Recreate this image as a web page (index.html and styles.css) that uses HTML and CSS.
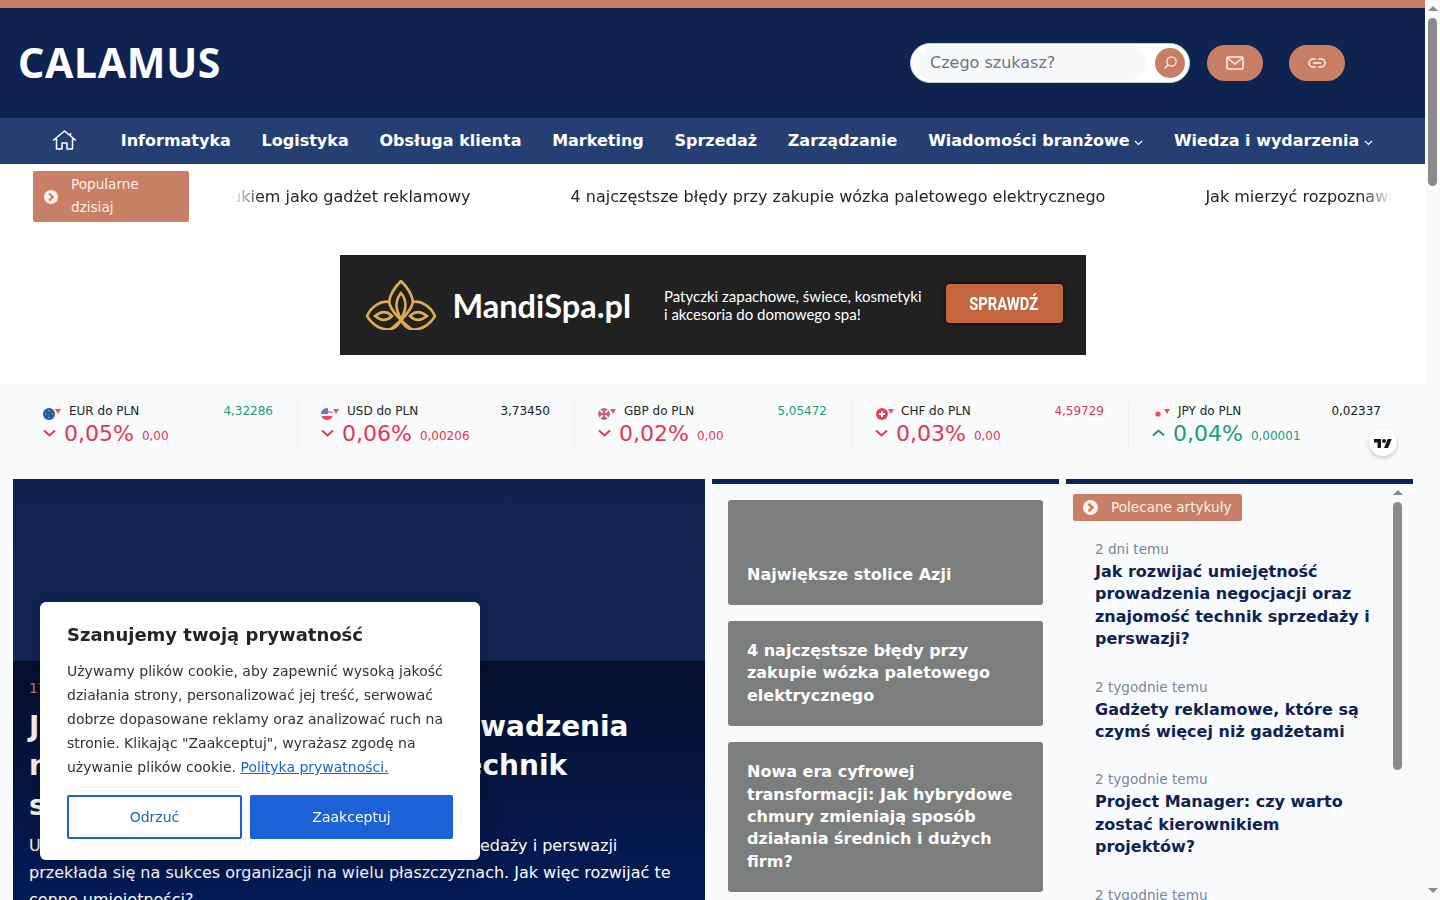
FILE: index.html
```html
<!DOCTYPE html>
<html lang="pl">

<head>
    <meta charset="UTF-8">
    <meta name="viewport" content="width=device-width, initial-scale=1.0">
    <title>Calamus</title>
    <link rel="stylesheet" href="styles.css">
</head>

<body>
    <div class="page">
        <header class="site-header">
            <a href="#" class="logo">CALAMUS</a>
            <div class="header-tools">
                <form class="search">
                    <span class="search-field">Czego szukasz?</span>
                    <span class="search-btn">
                        <svg width="16" height="16" viewBox="0 0 16 16" fill="none" stroke="#fdf1ea" stroke-width="1.2">
                            <circle cx="9.5" cy="6.5" r="4.6" />
                            <path d="M6 10 2.5 13.5" />
                        </svg>
                    </span>
                </form>
                <a href="#" class="pill-btn">
                    <svg width="18" height="14" viewBox="0 0 18 14" fill="none" stroke="#fdf1ea" stroke-width="1.5">
                        <rect x="1" y="1" width="16" height="12" rx="1.5" />
                        <path d="M1.5 2 9 8l7.5-6" />
                    </svg>
                </a>
                <a href="#" class="pill-btn">
                    <svg width="18" height="10" viewBox="0 0 18 10" fill="none" stroke="#fdf1ea" stroke-width="1.5" stroke-linecap="round">
                        <path d="M7 1H5a4 4 0 0 0 0 8h2M11 1h2a4 4 0 0 1 0 8h-2M5.5 5h7" />
                    </svg>
                </a>
            </div>
        </header>

        <nav class="main-nav">
            <a href="#" class="home-link">
                <svg width="25" height="20" viewBox="0 0 25 20" fill="none" stroke="#fff" stroke-width="1.5" stroke-linejoin="round">
                    <path d="M1 10.5 12.5 1 24 10.5M18.5 3v3.2M4.5 8.5V19h5.5v-6h5v6h5.500V8.500" />
                </svg>
            </a>
            <a href="#">Informatyka</a>
            <a href="#">Logistyka</a>
            <a href="#">Obsługa klienta</a>
            <a href="#">Marketing</a>
            <a href="#">Sprzedaż</a>
            <a href="#">Zarządzanie</a>
            <a href="#" class="has-sub">Wiadomości branżowe
                <svg width="9" height="6" viewBox="0 0 9 6" fill="none" stroke="#fff" stroke-width="1.2"><path d="M1 1l3.500 3.500L8 1" /></svg>
            </a>
            <a href="#" class="has-sub">Wiedza i wydarzenia
                <svg width="9" height="6" viewBox="0 0 9 6" fill="none" stroke="#fff" stroke-width="1.2"><path d="M1 1l3.500 3.500L8 1" /></svg>
            </a>
        </nav>

        <div class="ticker">
            <div class="ticker-label">
                <svg class="round-arrow" width="14" height="14" viewBox="0 0 14 14">
                    <circle cx="7" cy="7" r="7" fill="#fdf1ea" />
                    <path d="M5.200 3.500 8.700 7l-3.500 3.500" fill="none" stroke="#c97f66" stroke-width="2.400" />
                </svg>
                <span>Popularne dzisiaj</span>
            </div>
            <div class="ticker-window">
                <div class="ticker-track">
                    <span>Długopis z nadrukiem jako gadżet reklamowy</span>
                    <span>4 najczęstsze błędy przy zakupie wózka paletowego elektrycznego</span>
                    <span>Jak mierzyć rozpoznawalność marki</span>
                </div>
            </div>
        </div>

        <a href="#" class="ad-banner">
            <svg class="ad-logo" width="72" height="50" viewBox="5 11 70 50" fill="none" stroke="#dcab52" stroke-width="2.600">
                <path d="M40 12C46 18 51 24 52 33C60 31 70 38 74 47C68 57 58 62 50 60C45 59 42 55 40 51C38 55 35 59 30 60C22 62 12 57 6 47C10 38 20 31 28 33C29 24 34 18 40 12Z" />
                <path d="M40 24C35 30 33 38 40 50C47 38 45 30 40 24Z" />
                <path d="M28 33C30 42 38 50 50 60M52 33C50 42 42 50 30 60" />
                <path d="M14 47C20 42 26 42 31 47C26 52 20 52 14 47ZM66 47C60 42 54 42 49 47C54 52 60 52 66 47Z" />
            </svg>
            <span class="ad-brand">MandiSpa.pl</span>
            <span class="ad-copy">Patyczki zapachowe, świece, kosmetyki<br>i akcesoria do domowego spa!</span>
            <span class="ad-cta"><span>SPRAWDŹ</span></span>
        </a>

        <div class="lower">
            <section class="quotes">
                <div class="quote">
                    <div class="quote-top">
                        <svg class="flag" width="20" height="14" viewBox="0 0 20 14">
                            <circle cx="6" cy="8" r="6" fill="#1f5ea8" />
                            <circle cx="6" cy="4.500" r=".7" fill="#e8c53a" /><circle cx="9.500" cy="8" r=".7" fill="#e8c53a" />
                            <circle cx="6" cy="11.500" r=".7" fill="#e8c53a" /><circle cx="2.500" cy="8" r=".7" fill="#e8c53a" />
                            <path d="M12 3h6l-3 5z" fill="#ef5350" />
                        </svg>
                        <span class="quote-name">EUR do PLN</span>
                        <span class="quote-price up">4,32286</span>
                    </div>
                    <div class="quote-bottom down">
                        <svg class="chev" width="13" height="8" viewBox="0 0 13 8" fill="none" stroke="currentColor" stroke-width="2"><path d="M1 1.500l5.500 5 5.500-5" /></svg>
                        <span class="quote-pct">0,05%</span>
                        <span class="quote-chg">0,00</span>
                    </div>
                </div>
                <div class="quote">
                    <div class="quote-top">
                        <svg class="flag" width="20" height="14" viewBox="0 0 20 14">
                            <clipPath id="usd"><circle cx="6" cy="8" r="6" /></clipPath>
                            <g clip-path="url(#usd)">
                                <rect y="2" width="12" height="12" fill="#f4f4f6" />
                                <rect y="10" width="12" height="4" fill="#e4494f" />
                                <rect y="5.500" width="12" height="1.200" fill="#e4494f" />
                                <rect y="2" width="7" height="6" fill="#5b7fd0" />
                            </g>
                            <path d="M12 3h6l-3 5z" fill="#ef5350" />
                        </svg>
                        <span class="quote-name">USD do PLN</span>
                        <span class="quote-price">3,73450</span>
                    </div>
                    <div class="quote-bottom down">
                        <svg class="chev" width="13" height="8" viewBox="0 0 13 8" fill="none" stroke="currentColor" stroke-width="2"><path d="M1 1.500l5.500 5 5.500-5" /></svg>
                        <span class="quote-pct">0,06%</span>
                        <span class="quote-chg">0,00206</span>
                    </div>
                </div>
                <div class="quote">
                    <div class="quote-top">
                        <svg class="flag" width="20" height="14" viewBox="0 0 20 14">
                            <clipPath id="gbp"><circle cx="6" cy="8" r="6" /></clipPath>
                            <g clip-path="url(#gbp)">
                                <rect y="2" width="12" height="12" fill="#8b83a8" />
                                <path d="M0 2l12 12M12 2 0 14" stroke="#f0f0f4" stroke-width="1.600" />
                                <path d="M6 2v12M0 8h12" stroke="#e4596a" stroke-width="2" />
                            </g>
                            <path d="M12 3h6l-3 5z" fill="#ef5350" />
                        </svg>
                        <span class="quote-name">GBP do PLN</span>
                        <span class="quote-price up">5,05472</span>
                    </div>
                    <div class="quote-bottom down">
                        <svg class="chev" width="13" height="8" viewBox="0 0 13 8" fill="none" stroke="currentColor" stroke-width="2"><path d="M1 1.500l5.500 5 5.500-5" /></svg>
                        <span class="quote-pct">0,02%</span>
                        <span class="quote-chg">0,00</span>
                    </div>
                </div>
                <div class="quote">
                    <div class="quote-top">
                        <svg class="flag" width="20" height="14" viewBox="0 0 20 14">
                            <circle cx="7" cy="8" r="6" fill="#e8404f" />
                            <path d="M6 5h2v2h2v2H8v2H6V9H4V7h2z" fill="#fff" />
                            <path d="M13 3h6l-3 5z" fill="#ef5350" />
                        </svg>
                        <span class="quote-name">CHF do PLN</span>
                        <span class="quote-price down">4,59729</span>
                    </div>
                    <div class="quote-bottom down">
                        <svg class="chev" width="13" height="8" viewBox="0 0 13 8" fill="none" stroke="currentColor" stroke-width="2"><path d="M1 1.500l5.500 5 5.500-5" /></svg>
                        <span class="quote-pct">0,03%</span>
                        <span class="quote-chg">0,00</span>
                    </div>
                </div>
                <div class="quote">
                    <div class="quote-top">
                        <svg class="flag" width="20" height="14" viewBox="0 0 20 14">
                            <circle cx="6" cy="8" r="6" fill="#f4f5f8" />
                            <circle cx="6" cy="8" r="2.600" fill="#ec4a5c" />
                            <path d="M12 3h6l-3 5z" fill="#ef5350" />
                        </svg>
                        <span class="quote-name">JPY do PLN</span>
                        <span class="quote-price">0,02337</span>
                    </div>
                    <div class="quote-bottom up">
                        <svg class="chev" width="13" height="8" viewBox="0 0 13 8" fill="none" stroke="currentColor" stroke-width="2"><path d="M1 6.500l5.500-5 5.500 5" /></svg>
                        <span class="quote-pct">0,04%</span>
                        <span class="quote-chg">0,00001</span>
                    </div>
                </div>
                <a href="#" class="tv-badge">
                    <svg width="18" height="11" viewBox="0 0 36 22" fill="#131722">
                        <path d="M14 22H7V11H0V4h14v18zM28 22h-8l7.500-18h8L28 22z" />
                        <circle cx="20" cy="8" r="4" />
                    </svg>
                </a>
            </section>

            <main class="content-grid">
                <article class="hero">
                    <div class="hero-body">
                        <div class="hero-date">17.02.2025</div>
                        <h1>Jak rozwijać umiejętność prowadzenia negocjacji oraz znajomość technik sprzedaży i perswazji?</h1>
                        <p>Umiejętność prowadzenia negocjacji wraz z technik sprzedaży i perswazji przekłada się na sukces organizacji na wielu płaszczyznach. Jak więc rozwijać te cenne umiejętności?</p>
                    </div>
                </article>

                <section class="card-col">
                    <a href="#" class="tile">Największe stolice Azji</a>
                    <a href="#" class="tile">4 najczęstsze błędy przy zakupie wózka paletowego elektrycznego</a>
                    <a href="#" class="tile">Nowa era cyfrowej transformacji: Jak hybrydowe chmury zmieniają sposób działania średnich i dużych firm?</a>
                </section>

                <aside class="side-col">
                    <div class="side-label">
                        <svg class="round-arrow" width="15" height="15" viewBox="0 0 14 14">
                            <circle cx="7" cy="7" r="7" fill="#fdf1ea" />
                            <path d="M5.200 3.500 8.700 7l-3.500 3.500" fill="none" stroke="#c97f66" stroke-width="2.400" />
                        </svg>
                        Polecane artykuły
                    </div>
                    <ul class="side-list">
                        <li>
                            <time>2 dni temu</time>
                            <a href="#">Jak rozwijać umiejętność prowadzenia negocjacji oraz znajomość technik sprzedaży i perswazji?</a>
                        </li>
                        <li>
                            <time>2 tygodnie temu</time>
                            <a href="#">Gadżety reklamowe, które są czymś więcej niż gadżetami</a>
                        </li>
                        <li>
                            <time>2 tygodnie temu</time>
                            <a href="#">Project Manager: czy warto zostać kierownikiem projektów?</a>
                        </li>
                        <li>
                            <time>2 tygodnie temu</time>
                        </li>
                    </ul>
                    <span class="list-arrow"></span>
                    <span class="list-thumb"></span>
                </aside>
            </main>
        </div>
    </div>

    <!-- Page scrollbar -->
    <div class="page-scroll">
        <span class="arrow-up"></span>
        <span class="page-thumb"></span>
        <span class="arrow-down"></span>
    </div>

    <!-- Cookie modal -->
    <div class="cookie-box">
        <h2>Szanujemy twoją prywatność</h2>
        <p>Używamy plików cookie, aby zapewnić wysoką jakość działania strony, personalizować jej treść, serwować dobrze dopasowane reklamy oraz analizować ruch na stronie. Klikając "Zaakceptuj", wyrażasz zgodę na używanie plików cookie. <a href="#">Polityka prywatności.</a></p>
        <div class="cookie-actions">
            <button class="btn-reject">Odrzuć</button>
            <button class="btn-accept">Zaakceptuj</button>
        </div>
    </div>
</body>

</html>
```

FILE: styles.css
```css
html {
    overflow: hidden;
}

body {
    margin: 0;
    padding: 0;
    height: 900px;
    overflow: hidden;
    background-color: #fff;
    font-family: "DejaVu Sans", sans-serif;
    color: #212529;
}

a {
    text-decoration: none;
    color: inherit;
}

.page {
    width: 1425px;
    height: 900px;
    overflow: hidden;
}

/* Header */
.site-header {
    display: flex;
    align-items: center;
    justify-content: space-between;
    height: 110px;
    border-top: 8px solid #c97f66;
    background-color: #0f2350;
    padding: 0 80px 0 18px;
}

.logo {
    margin-bottom: 2px;
    font-family: "Noto Sans", sans-serif;
    font-size: 41px;
    font-weight: 700;
    letter-spacing: 0.7px;
    color: #fff;
    line-height: 1;
}

.header-tools {
    display: flex;
    align-items: center;
    gap: 26px;
}

.search {
    display: flex;
    align-items: center;
    justify-content: space-between;
    box-sizing: border-box;
    width: 280px;
    height: 40px;
    margin-right: -9px;
    padding: 0 4px 0 5px;
    background-color: #fff;
    border: 1px solid #c9ced8;
    border-radius: 20px;
}

.search-field {
    flex: 0 0 230px;
    box-sizing: border-box;
    height: 34px;
    padding-left: 14px;
    line-height: 34px;
    font-size: 16px;
    color: #6c757d;
    background-color: #f8f9fb;
    border-radius: 17px;
}

.search-btn {
    display: flex;
    align-items: center;
    justify-content: center;
    width: 30px;
    height: 30px;
    background-color: #c97f66;
    border-radius: 50%;
}

.pill-btn {
    display: flex;
    align-items: center;
    justify-content: center;
    width: 56px;
    height: 36px;
    background-color: #c97f66;
    border-radius: 18px;
}

/* Navigation */
.main-nav {
    display: flex;
    align-items: center;
    gap: 30.7px;
    box-sizing: border-box;
    height: 46px;
    padding: 0 0 2px 52px;
    background-color: #263f72;
    font-size: 16px;
    font-weight: 700;
    color: #fff;
}

.home-link {
    display: flex;
    margin-right: 13px;
}

.has-sub svg {
    margin-left: -1px;
}

/* Ticker */
.ticker {
    display: flex;
    align-items: center;
    padding: 7px 33px 0;
}

.ticker-label {
    display: flex;
    align-items: center;
    gap: 13px;
    box-sizing: border-box;
    width: 156px;
    height: 51px;
    padding: 0 11px 2px;
    background-color: #c97f66;
    border-radius: 2px;
    color: #fdf1ea;
    font-size: 13.600px;
    line-height: 23px;
}

.ticker-label span {
    width: 90px;
}

.ticker-label .round-arrow {
    margin-top: 2px;
}

.round-arrow {
    flex: none;
}

.ticker-window {
    width: 1160px;
    margin-left: 43px;
    overflow: hidden;
    font-size: 16px;
    white-space: nowrap;
    -webkit-mask-image: linear-gradient(90deg, transparent, #000 30px, #000 1130px, transparent);
    mask-image: linear-gradient(90deg, transparent, #000 30px, #000 1130px, transparent);
}

.ticker-track {
    display: flex;
    gap: 100px;
    margin-left: -126px;
}

/* Ad */
.ad-banner {
    display: flex;
    align-items: center;
    width: 746px;
    height: 100px;
    box-sizing: border-box;
    margin: 33px auto 29px;
    padding: 0 23px 0 25px;
    background-color: #212121;
    color: #fff;
}

.ad-logo {
    flex: none;
}

.ad-brand {
    margin-left: 16px;
    font-family: Lato, sans-serif;
    font-size: 32.500px;
    font-weight: 700;
}

.ad-copy {
    margin-left: 33px;
    font-family: Lato, sans-serif;
    font-size: 15px;
    line-height: 18px;
}

.ad-cta {
    margin-left: auto;
    margin-top: -3px;
    width: 117px;
    height: 39px;
    background-color: #c36640;
    border-radius: 4px;
    box-shadow: 0 0 3px 2px #14171c;
    text-align: center;
    font-family: Roboto, sans-serif;
    font-size: 17px;
    font-weight: 700;
    line-height: 39px;
}

.ad-cta span {
    display: inline-block;
    transform: scale(0.87, 1.1);
}

/* Quotes */
.lower {
    height: 516px;
    background-color: #f9fafc;
}

.quotes {
    display: grid;
    grid-template-columns: repeat(5, 1fr);
    position: relative;
    padding: 17px 20px 27px;
}

.quote {
    height: 51px;
    padding: 0 24px 0 23px;
}

.quote + .quote {
    border-left: 1px solid #eff1f4;
}

.quote-top {
    display: flex;
    align-items: center;
    height: 19px;
    font-size: 12px;
}

.flag {
    flex: none;
    margin-right: 6px;
    margin-top: 4px;
}

.quote-price {
    margin-left: auto;
    color: #131722;
}

.up {
    color: #1a9a80;
}

.down {
    color: #e0394f;
}

.quote-top .quote-price.up {
    color: #1a9a80;
}

.quote-top .quote-price.down {
    color: #e0394f;
}

.quote-bottom {
    display: flex;
    align-items: center;
    height: 26px;
}

.chev {
    flex: none;
    margin-right: 8px;
}

.quote-pct {
    font-size: 22px;
    margin-right: 8px;
}

.quote-chg {
    font-size: 12px;
    padding-top: 6px;
}

.tv-badge {
    position: absolute;
    left: 1369px;
    top: 44px;
    display: flex;
    align-items: center;
    justify-content: center;
    width: 28px;
    height: 28px;
    background-color: #fff;
    border-radius: 50%;
    box-shadow: 0 2px 4px rgba(0, 0, 0, 0.2);
}

/* Content columns */
.content-grid {
    display: grid;
    grid-template-columns: 692px 347px 347px;
    gap: 7px;
    padding-left: 13px;
}

.hero {
    height: 421px;
    padding-top: 182px;
    box-sizing: border-box;
    background: linear-gradient(#0f2350, #14295c);
    color: #fff;
}

.hero-body {
    height: 239px;
    box-sizing: border-box;
    padding: 19px 16px 0;
    background: linear-gradient(#060f2c, #021b56);
}

.hero-date {
    font-size: 14px;
    color: #c97f66;
}

.hero h1 {
    margin: 11px 0 0;
    font-size: 27.950px;
    font-weight: 700;
    line-height: 39.300px;
}

.hero p {
    margin: 7px 0 0;
    font-size: 16px;
    line-height: 27px;
}

.card-col {
    display: flex;
    flex-direction: column;
    gap: 16px;
    padding: 16px 16px 0;
    border-top: 5px solid #0f2350;
}

.tile {
    display: flex;
    align-items: flex-end;
    box-sizing: border-box;
    min-height: 105px;
    padding: 19px 19px;
    background-color: #7c7d7d;
    border-radius: 3px;
    color: #fff;
    font-size: 16px;
    font-weight: 700;
    line-height: 22.400px;
}

.side-col {
    position: relative;
    height: 416px;
    overflow: hidden;
    border-top: 5px solid #0f2350;
}

.side-label {
    display: flex;
    align-items: center;
    gap: 13px;
    box-sizing: border-box;
    width: 169px;
    height: 27px;
    margin: 10px 0 0 7px;
    padding: 0 0 1px 10px;
    background-color: #c97f66;
    border-radius: 2px;
    color: #fdf1ea;
    font-size: 13.600px;
}

.side-label .round-arrow {
    margin-top: 1px;
}

.side-list {
    list-style: none;
    margin: 18px 0 0;
    padding: 0 0 0 29px;
    width: 278px;
}

.side-list li {
    margin-bottom: 26px;
}

.side-list time {
    display: block;
    margin-bottom: 2px;
    font-size: 13.600px;
    line-height: 20px;
    color: #7b869b;
}

.side-list a {
    display: block;
    font-size: 16px;
    font-weight: 700;
    line-height: 22.400px;
    color: #0f2350;
}

.list-arrow {
    position: absolute;
    left: 327px;
    top: 6px;
    border: 5px solid transparent;
    border-top: none;
    border-bottom: 5px solid #8a8a8a;
}

.list-thumb {
    position: absolute;
    left: 327px;
    top: 18px;
    width: 9px;
    height: 268px;
    background-color: #8a8a8a;
    border-radius: 5px;
}

/* Page scrollbar */
.page-scroll {
    position: fixed;
    top: 0;
    right: 0;
    width: 15px;
    height: 900px;
    background-color: #fafafa;
}

.arrow-up,
.arrow-down {
    position: absolute;
    left: 3px;
    border: 5px solid transparent;
}

.arrow-up {
    top: 6px;
    border-top: none;
    border-bottom: 5px solid #8a8a8a;
}

.arrow-down {
    top: 888px;
    border-bottom: none;
    border-top: 5px solid #8a8a8a;
}

.page-thumb {
    position: absolute;
    left: 3px;
    top: 18px;
    width: 9px;
    height: 168px;
    background-color: #8a8a8a;
    border-radius: 5px;
}

/* Cookie box */
.cookie-box {
    position: fixed;
    left: 40px;
    top: 602px;
    width: 440px;
    height: 258px;
    box-sizing: border-box;
    padding: 22px 27px;
    background-color: #fff;
    border-radius: 6px;
    box-shadow: 0 4px 24px rgba(0, 0, 0, 0.25);
}

.cookie-box h2 {
    margin: 0;
    font-size: 18px;
    font-weight: 700;
    line-height: 22px;
    color: #212529;
}

.cookie-box p {
    margin: 13px 0 0;
    font-size: 14px;
    line-height: 24px;
    color: #2f3338;
}

.cookie-box p a {
    color: #1a62d6;
    text-decoration: underline;
}

.cookie-actions {
    display: flex;
    gap: 8px;
    margin-top: 16px;
}

.cookie-actions button {
    height: 44px;
    border-radius: 2px;
    font-family: "DejaVu Sans", sans-serif;
    font-size: 14px;
}

.btn-reject {
    flex: 0 0 175px;
    background-color: #fff;
    border: 2px solid #1a62d6;
    color: #1a62d6;
}

.btn-accept {
    flex: 1;
    background-color: #1a62d6;
    border: none;
    color: #fff;
}
```
